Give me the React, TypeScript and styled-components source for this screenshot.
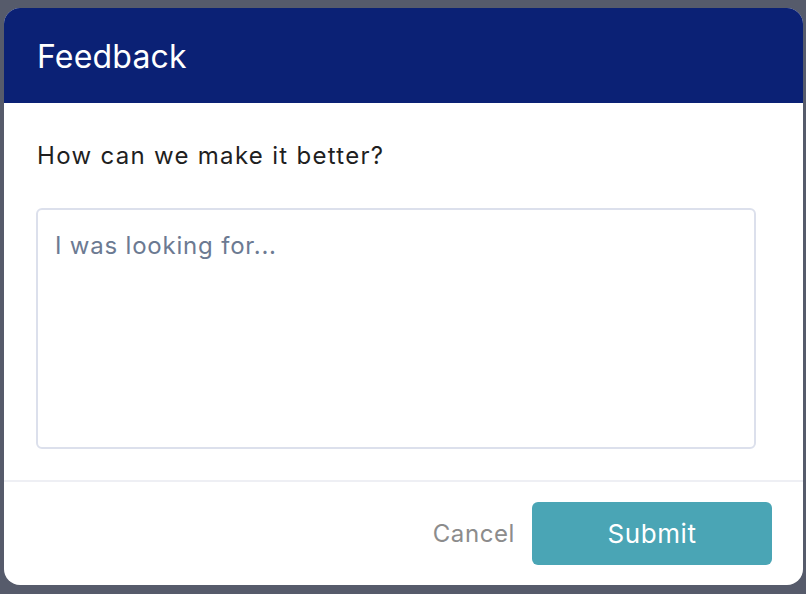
import styled, {createGlobalStyle} from "styled-components";

const Global = createGlobalStyle`
    html, body {
        margin: 0;
        padding: 0;
        background: #565b6b;
        font-family: Inter, "Noto Sans", sans-serif;
    }
`

const Backdrop = styled.div`
    width: 806px;
    height: 594px;
    box-sizing: border-box;
    padding: 8px 3px 9px 4px;
    display: flex;
`

const Modal = styled.div`
    flex: 1;
    display: flex;
    flex-direction: column;
    background: #ffffff;
    border-radius: 16px;
    overflow: hidden;
`

const Header = styled.div`
    height: 95px;
    box-sizing: border-box;
    padding: 2px 33px 0;
    display: flex;
    align-items: center;
    background: #0b2175;
`

const Title = styled.h1`
    margin: 0;
    font-size: 32px;
    font-weight: 400;
    color: #ffffff;
    letter-spacing: 0.2px;
`

const Body = styled.div`
    flex: 1;
    padding: 37px 33px 0;
    display: flex;
    flex-direction: column;
    gap: 36px;
`

const Question = styled.p`
    margin: 0;
    font-size: 24px;
    letter-spacing: 1.3px;
    color: #1f1f1f;
    line-height: 32px;
`

const TextArea = styled.textarea`
    width: 720px;
    height: 241px;
    box-sizing: border-box;
    margin-left: -1px;
    padding: 21px 17px;
    border: 2px solid #dce0ec;
    border-radius: 6px;
    resize: none;
    font-family: inherit;
    font-size: 24px;
    letter-spacing: 0.8px;
    color: #1f1f1f;
    outline: none;

    &::placeholder {
        color: #6c7a92;
    }
`

const Footer = styled.div`
    border-top: 2px solid #eeeff4;
    padding: 20px 31px 20px;
    display: flex;
    justify-content: flex-end;
    align-items: center;
    gap: 17px;
`

const TextButton = styled.button`
    background: none;
    border: none;
    padding: 0;
    font-family: inherit;
    font-size: 24px;
    letter-spacing: 0.6px;
    color: #8c8c8c;
    cursor: pointer;
`

const PrimaryButton = styled.button`
    width: 240px;
    height: 63px;
    border: none;
    border-radius: 6px;
    background: #4aa5b5;
    color: #ffffff;
    font-family: inherit;
    font-size: 26px;
    letter-spacing: 0.6px;
    cursor: pointer;
`

function App() {
    return <>
        <Global/>
        <Backdrop>
            <Modal>
                <Header>
                    <Title>Feedback</Title>
                </Header>
                <Body>
                    <Question>How can we make it better?</Question>
                    <TextArea placeholder="I was looking for..."/>
                </Body>
                <Footer>
                    <TextButton>Cancel</TextButton>
                    <PrimaryButton>Submit</PrimaryButton>
                </Footer>
            </Modal>
        </Backdrop>
    </>
}

export default App;
